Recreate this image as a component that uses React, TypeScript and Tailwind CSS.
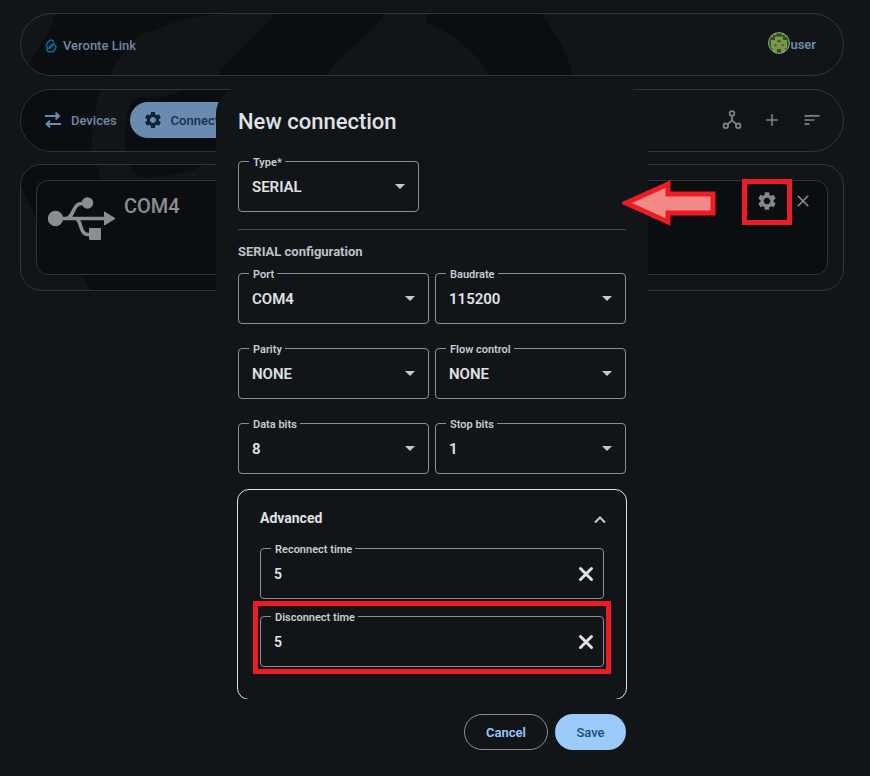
import type { ReactNode } from "react";
import { MdSettings, MdClose, MdAdd, MdSort } from "react-icons/md";

function Backdrop({ box, children }: { box: string; children: ReactNode }) {
  return (
    <svg
      className="pointer-events-none absolute inset-0 h-full w-full"
      viewBox={box}
      preserveAspectRatio="xMinYMin slice"
      fill="#0a0e10"
      aria-hidden="true"
    >
      {children}
    </svg>
  );
}

function LinkLogo() {
  return (
    <svg className="h-[14px] w-3" viewBox="0 0 12 14" fill="none" stroke="#0f6796" strokeWidth="1.6" strokeLinecap="round" aria-hidden="true">
      <path d="M2.2 8.2C.6 6 1.8 4 3.2 3.2 4.2 1 6.4.6 7.6 1.4 9.2 2.4 9 4.4 7.8 5.2L4.6 7.6" />
      <path d="M9.2 5.4c2 1.2 2.2 3.4.8 4.6-.6 2.4-3 3.2-5 2.8C2.6 12.6 1.4 11 2.2 9.6 2.8 8.4 4.6 9.4 5.6 8.6L8 6.8" />
    </svg>
  );
}

function SwapIcon() {
  return (
    <svg className="h-4 w-[18px]" viewBox="0 0 18 16" fill="none" stroke="#6a8bae" strokeWidth="2" aria-hidden="true">
      <path d="M1 4h14.5M11.500.8 15 4 11.500 7.200M17 12H2.500M6 8.800 2.600 12 6 15.200" />
    </svg>
  );
}

function HubIcon() {
  return (
    <svg className="h-5 w-5" viewBox="0 0 20 20" fill="none" stroke="#7d8084" strokeWidth="1.8" aria-hidden="true">
      <circle cx="10" cy="3.5" r="2.3" />
      <circle cx="3.8" cy="15.8" r="2.3" />
      <circle cx="16.2" cy="15.8" r="2.3" />
      <path d="M10 5.800V10.400L5.500 14.200M10 10.400 14.500 14.200" />
    </svg>
  );
}

function UsbIcon() {
  return (
    <svg className="h-[43px] w-[68px]" viewBox="0 0 68 43" fill="#8b8d94" aria-hidden="true">
      <circle cx="7.5" cy="21.5" r="7.7" />
      <circle cx="39.5" cy="6" r="5.8" />
      <rect x="41" y="31" width="12" height="12" rx="1" />
      <path d="M56.500 15 67 21.500 56.500 28z" stroke="#8b8d94" strokeWidth="1" strokeLinejoin="round" />
      <path
        d="M8 21.500H58M18 21.500C26 21.500 24 6.500 34 6.500H38M27 21.500C34 21.500 31 37.500 40 37.500H43"
        fill="none"
        stroke="#8b8d94"
        strokeWidth="3.6"
      />
    </svg>
  );
}

function Avatar() {
  return (
    <svg className="h-[22px] w-[22px]" viewBox="0 0 22 22" aria-hidden="true">
      <defs>
        <clipPath id="avatar">
          <circle cx="11" cy="11" r="10.3" />
        </clipPath>
      </defs>
      <g clipPath="url(#avatar)">
        <rect width="22" height="22" fill="#1f5c0a" />
        <path
          d="M7 4.500h8V8h4v8h-1.500v6H13v-5H9v5H4.500v-6H3V8h4zM5 0h3v3H5zM14 0h3v3h-3zM2 3h3v2H2zM17 3h3v2h-3z"
          fill="#7d9350"
        />
        <path d="M9 8.500h4V10H9zM6.500 12.500h2V14h-2zM13.500 12.500h2V14h-2z" fill="#1f5c0a" />
      </g>
      <circle cx="11" cy="11" r="10.4" fill="none" stroke="#a3a8a2" />
    </svg>
  );
}

const LABEL =
  "absolute -top-[6px] left-[10px] bg-[#111518] pr-[3px] pl-1 text-[11px] leading-[14px] font-semibold text-[#c9cbd1]";

function SelectField({ id, label, value }: { id: string; label: string; value: string }) {
  return (
    <div className="relative h-[51px] min-w-0 rounded border border-[#8c9096]">
      <label htmlFor={id} className={LABEL}>
        {label}
      </label>
      <select
        id={id}
        defaultValue={value}
        className="h-full w-full appearance-none bg-transparent pt-px pr-10 pl-[13px] text-[15px] font-semibold text-[#e0e2e6] outline-none"
      >
        <option>{value}</option>
      </select>
      <svg className="pointer-events-none absolute top-[22px] right-[13px] h-[5px] w-[10px]" viewBox="0 0 10 5" fill="#c6c8ce" aria-hidden="true">
        <path d="M0 0h10L5 5z" />
      </svg>
    </div>
  );
}

function TimeField({ id, label, value }: { id: string; label: string; value: string }) {
  return (
    <div className="relative flex h-[51px] items-center rounded border border-[#8c9096]">
      <label htmlFor={id} className={LABEL}>
        {label}
      </label>
      <input
        id={id}
        defaultValue={value}
        className="h-full min-w-0 flex-1 bg-transparent pl-[13px] text-sm font-semibold text-[#e0e2e6] outline-none"
      />
      <button type="button" aria-label={"Clear " + label} className="mr-[9px]">
        <svg className="h-4 w-4" viewBox="0 0 16 16" stroke="#e0e2e6" strokeWidth="3" strokeLinecap="round" aria-hidden="true">
          <path d="M2.500 2.500l11 11M13.500 2.500l-11 11" />
        </svg>
      </button>
    </div>
  );
}

function Page() {
  return (
    <div className="flex flex-col gap-[13px] pt-[13px] pr-[26px] pl-5">
      <header className="relative flex h-[63px] items-center justify-between overflow-hidden rounded-full border border-[#30353a] pr-[27px] pl-6">
        <Backdrop box="21 14 822 61">
          <path d="M56 14Q50 32 40 46 34 54 30 64L20 75H111Q111 70 118 60C128 48 134 38 141 34Q147 30 153 31C175 20 195 15 230 14z" />
          <path d="M275 14Q272 19 268 22L224 66Q220 70 219 75H328Q329 70 333 66L377 24Q383 19 384 14z" />
          <path d="M427 14V23C445 30 455 37 465 46 480 60 488 69 488 75H572C568 54 558 37 544 18L543 14z" />
        </Backdrop>
        <div className="relative flex items-center gap-[6px] pt-[2px]">
          <LinkLogo />
          <span className="text-[13px] leading-[18px] font-medium text-[#7088a6]">Veronte Link</span>
        </div>
        <div className="relative flex items-start pb-[3px]">
          <Avatar />
          <span className="pt-1 text-[13px] leading-[18px] font-semibold text-[#6a8bae]">user</span>
        </div>
      </header>

      <nav className="relative flex h-[63px] items-center justify-between overflow-hidden rounded-full border border-[#30353a] pr-[21px] pb-px pl-[23px]">
        <Backdrop box="21 90 822 61">
          <path d="M20 90H100C96 105 92 120 92 136V152H20z" />
          <path d="M182 90Q172 97 150 98 134 97 131 103C126 115 125 130 125 152H230V90z" />
        </Backdrop>
        <div className="relative flex items-center gap-[13px]">
          <button type="button" className="flex items-center gap-[9px] text-[13px] font-medium text-[#7088a6]">
            <SwapIcon />
            <span className="pt-[2px] leading-[18px]">Devices</span>
          </button>
          <button
            type="button"
            className="flex h-9 items-center gap-2 rounded-full bg-[#6a8bae] pr-12 pl-[13px] text-[13px] font-medium text-[#12304a]"
          >
            <MdSettings className="text-[20px] text-[#0d2233]" />
            <span className="pt-[2px] leading-[18px]">Connect</span>
          </button>
        </div>
        <div className="relative flex items-center gap-5 text-[20px] text-[#7d8084]">
          <button type="button" aria-label="Topology"><HubIcon /></button>
          <button type="button" aria-label="Add"><MdAdd /></button>
          <button type="button" aria-label="Sort"><MdSort /></button>
        </div>
      </nav>

      <main className="relative -mt-px overflow-hidden rounded-[22px] border border-[#30353a] p-[15px]">
        <Backdrop box="21 165 822 125">
          <path d="M20 165H97L101 182H36V220L20 183z" />
          <path d="M130 165Q131 175 143 177 185 176 203 165z" />
          <path d="M77 270Q86 282 92 291H230V270z" />
        </Backdrop>
        <section className="relative flex h-[95px] items-start justify-between rounded-xl border border-[#30353a] bg-[#0a0e10] pr-[14px] pl-[11px]">
          <div className="flex gap-2 pt-3">
            <div className="pt-1"><UsbIcon /></div>
            <h2 className="text-[20px] leading-[26px] font-medium text-[#8b8d94]">COM4</h2>
          </div>
          <div className="-mt-[2px] flex items-center gap-px">
            <button type="button" aria-label="Configure connection" className="flex h-[46px] w-[50px] items-center justify-center border-[5px] border-[#ed1c24] pb-[2px] text-[#85878c]">
              <MdSettings className="text-[22px]" />
            </button>
            <button type="button" aria-label="Remove connection" className="pb-[2px] text-[#85878c]">
              <MdClose className="text-[20px]" />
            </button>
          </div>
        </section>
      </main>
    </div>
  );
}

function Dialog() {
  return (
    <div className="absolute inset-x-0 top-[86px] flex justify-center pr-[6px]">
      <form
        role="dialog"
        aria-label="New connection"
        className="relative flex w-[432px] flex-col rounded-[28px] bg-[#111518] px-[22px] pt-[23px] pb-6"
      >
        <h1 className="text-[22px] leading-[26px] font-medium text-[#dfe1e6]">New connection</h1>
        <div className="mt-[26px] w-[181px]">
          <SelectField id="type" label="Type*" value="SERIAL" />
        </div>
        <hr className="mt-[17px] border-[#43474b]" />
        <h2 className="mt-[13px] text-[13px] leading-[18px] font-bold text-[#bfc1c8]">SERIAL configuration</h2>
        <div className="mt-3 grid grid-cols-2 gap-x-[6px] gap-y-6">
          <SelectField id="port" label="Port" value="COM4" />
          <SelectField id="baudrate" label="Baudrate" value="115200" />
          <SelectField id="parity" label="Parity" value="NONE" />
          <SelectField id="flow" label="Flow control" value="NONE" />
          <SelectField id="data-bits" label="Data bits" value="8" />
          <SelectField id="stop-bits" label="Stop bits" value="1" />
        </div>
        <div className="-mx-px mt-[15px] h-[210px] overflow-hidden">
          <section className="h-[211px] rounded-xl border border-[#e0e2e6] px-[22px] pt-[18px]">
            <button type="button" className="flex w-full items-center justify-between text-sm font-bold text-[#e0e2e6]">
              Advanced
              <svg className="-mr-[2px] h-3 w-3" viewBox="0 0 12 12" fill="none" stroke="#c6c8ce" strokeWidth="2" aria-hidden="true">
                <path d="M1 10.500l5-5 5 5" />
              </svg>
            </button>
            <div className="mt-5">
              <TimeField id="reconnect" label="Reconnect time" value="5" />
            </div>
            <div className="-mx-[7px] mt-[2px] border-[5px] border-[#ed1c24] px-[2px] pt-[10px] pb-[2px]">
              <TimeField id="disconnect" label="Disconnect time" value="5" />
            </div>
          </section>
        </div>
        <div className="mt-[15px] flex justify-end gap-[7px]">
          <button type="button" className="h-9 w-[84px] rounded-full border border-[#8c9096] pt-px text-[13px] font-semibold text-[#9ccafb]">
            Cancel
          </button>
          <button type="button" className="h-9 w-[71px] rounded-full bg-[#9ccafb] pt-px text-[13px] font-medium text-[#1d4c74]">
            Save
          </button>
        </div>
        <svg className="absolute top-[94px] left-[406px] h-[46px] w-[94px]" viewBox="0 0 94 46" aria-hidden="true">
          <path d="M4 23 46 4V14H91V33H46V42z" fill="#f28b88" stroke="#ed1c24" strokeWidth="5" />
        </svg>
      </form>
    </div>
  );
}

export default function App() {
  return (
    <div className="relative min-h-screen bg-[#111518] font-[Roboto,sans-serif]">
      <Page />
      <Dialog />
    </div>
  );
}
